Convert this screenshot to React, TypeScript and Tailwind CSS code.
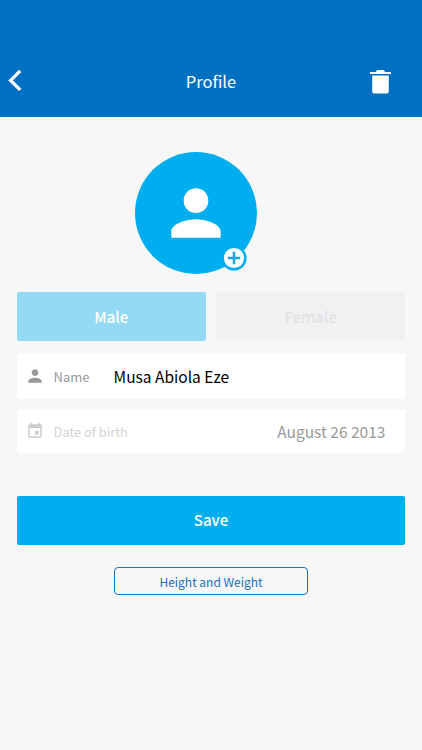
import type { ReactNode } from "react";

const PERSON_PATH =
  "M12 12c2.21 0 4-1.79 4-4s-1.79-4-4-4-4 1.79-4 4 1.79 4 4 4zm0 2c-2.67 0-8 1.34-8 4v2h16v-2c0-2.66-5.33-4-8-4z";

const PersonIcon = ({ className }: { className: string }) => (
  <svg viewBox="0 0 24 24" fill="currentColor" className={className}>
    <path d={PERSON_PATH} />
  </svg>
);

const CalendarIcon = ({ className }: { className: string }) => (
  <svg viewBox="0 0 24 24" fill="currentColor" className={className}>
    <path d="M17 12h-5v5h5v-5zM16 1v2H8V1H6v2H5c-1.11 0-2 .9-2 2v14c0 1.1.89 2 2 2h14c1.1 0 2-.9 2-2V5c0-1.1-.9-2-2-2h-1V1h-2zm3 18H5V8h14v11z" />
  </svg>
);

const Header = () => (
  <header className="flex h-[117px] items-end justify-between bg-[#0070c2] pr-[30px] pb-[22px] pl-2 text-white">
    <button type="button" aria-label="Back" className="w-[37px]">
      <svg viewBox="0 0 14 28" className="h-7 w-3.5" fill="none">
        <path d="M12.2 3.9 2.6 13.4l9.6 9.5" stroke="currentColor" strokeWidth="3.3" />
      </svg>
    </button>
    <h1 className="mb-0.5 ml-2 text-[16.5px] leading-6">Profile</h1>
    <button type="button" aria-label="Delete" className="flex w-[23px]">
      <svg viewBox="0 0 23 26" className="h-[26px] w-[23px]" fill="currentColor">
        <path d="M1.4 3.1h5.2c.6 0 1.1-2.1 2-2.1h5.8c.9 0 1.4 2.1 2 2.1h5.2q.4 0 .4.5v1.5H1V3.6q0-.5.4-.5zM3.2 6.6h16.6V22a2.6 2.6 0 0 1-2.6 2.6H5.8A2.6 2.6 0 0 1 3.2 22z" />
      </svg>
    </button>
  </header>
);

const Avatar = () => (
  <div className="relative mt-[35px] ml-[118.4px] flex size-[122px] items-center justify-center rounded-full bg-[#00aeef]">
    <PersonIcon className="size-[74px] text-white" />
    <svg viewBox="0 0 26 26" className="absolute top-[93px] left-[86px] size-[26px]">
      <circle cx="13" cy="13" r="12.6" fill="#00aeef" />
      <circle cx="13" cy="13" r="10.1" fill="#fff" />
      <path d="M13 6.8v12.4M6.8 13h12.4" stroke="#1ea4dc" strokeWidth="2.5" />
    </svg>
  </div>
);

const Field = ({
  className,
  children,
}: {
  className: string;
  children: ReactNode;
}) => (
  <div className={`flex items-center rounded-xs bg-white ${className}`}>
    {children}
  </div>
);

export default function App() {
  return (
    <div className="h-[750px] w-[422px] bg-[#f7f7f8] font-['Noto_Sans_CJK_SC',sans-serif]">
      <Header />
      <main className="flex flex-col px-[16.6px]">
        <Avatar />
        <div className="mt-[18px] flex gap-2.5 text-[15px] font-medium">
          <button type="button" className="h-[49px] flex-1 rounded-xs bg-[#94daf5] pt-0.5 text-white">
            Male
          </button>
          <button type="button" className="h-[49px] flex-1 rounded-xs bg-[#f0f1f3] pt-0.5 text-[#e1e2e4]">
            Female
          </button>
        </div>

        <Field className="mt-[13px] h-[45px] pl-2">
          <PersonIcon className="mb-0.5 size-5 text-[#999]" />
          <span className="ml-[9px] w-[60px] pt-px text-[13px] text-[#999]">Name</span>
          <span className="pt-px text-[15.5px] text-black">Musa Abiola Eze</span>
        </Field>
        <Field className="mt-[11px] h-[43px] pr-5 pl-[9px]">
          <CalendarIcon className="mb-0.5 size-[18px] text-[#ccc]" />
          <span className="ml-2.5 text-[12.8px] text-[#d2d2d2]">Date of birth</span>
          <span className="ml-auto text-[15.5px] text-[#999]">August 26 2013</span>
        </Field>

        <button type="button" className="mt-[42.5px] h-[49px] rounded-xs bg-[#00aeef] text-[15px] font-medium text-white">
          Save
        </button>
        <button type="button" className="mt-[22.5px] h-7 w-[194px] self-center rounded border border-[#1976bc] pt-0.5 text-xs text-[#1971b8]">
          Height and Weight
        </button>
      </main>
    </div>
  );
}
